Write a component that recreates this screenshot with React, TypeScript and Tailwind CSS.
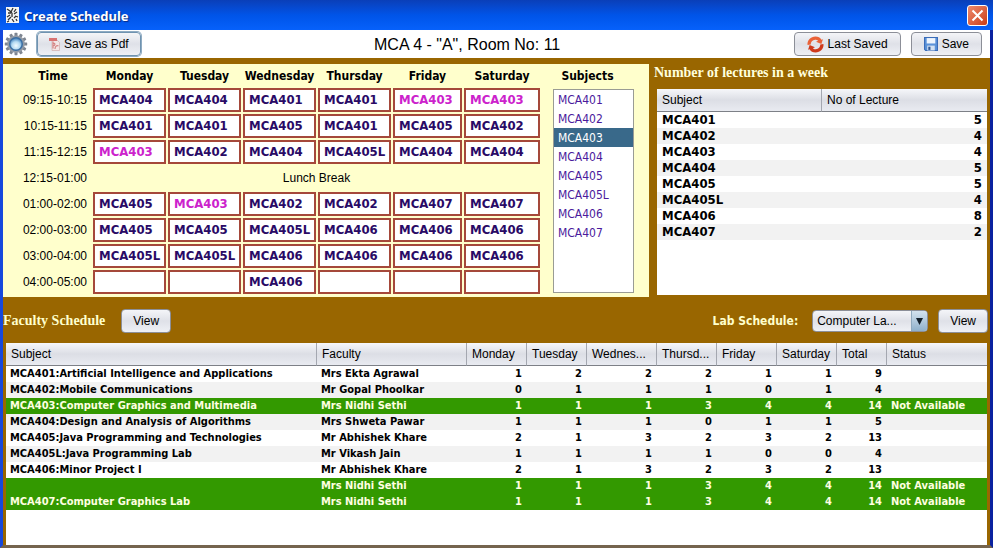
import type { ReactNode } from 'react';

const days = ['Monday', 'Tuesday', 'Wednesday', 'Thursday', 'Friday', 'Saturday'];

const slots: { time: string; cells: string[] | null }[] = [
  { time: '09:15-10:15', cells: ['MCA404', 'MCA404', 'MCA401', 'MCA401', 'MCA403', 'MCA403'] },
  { time: '10:15-11:15', cells: ['MCA401', 'MCA401', 'MCA405', 'MCA401', 'MCA405', 'MCA402'] },
  { time: '11:15-12:15', cells: ['MCA403', 'MCA402', 'MCA404', 'MCA405L', 'MCA404', 'MCA404'] },
  { time: '12:15-01:00', cells: null },
  { time: '01:00-02:00', cells: ['MCA405', 'MCA403', 'MCA402', 'MCA402', 'MCA407', 'MCA407'] },
  { time: '02:00-03:00', cells: ['MCA405', 'MCA405', 'MCA405L', 'MCA406', 'MCA406', 'MCA406'] },
  { time: '03:00-04:00', cells: ['MCA405L', 'MCA405L', 'MCA406', 'MCA406', 'MCA406', 'MCA406'] },
  { time: '04:00-05:00', cells: ['', '', 'MCA406', '', '', ''] },
];

const lectures: [string, number][] = [
  ['MCA401', 5],
  ['MCA402', 4],
  ['MCA403', 4],
  ['MCA404', 5],
  ['MCA405', 5],
  ['MCA405L', 4],
  ['MCA406', 8],
  ['MCA407', 2],
];

const facultyHeads = ['Subject', 'Faculty', 'Monday', 'Tuesday', 'Wednes...', 'Thursd...', 'Friday', 'Saturday', 'Total', 'Status'];

const faculty: { subject: string; name: string; counts: number[]; busy?: boolean }[] = [
  { subject: 'MCA401:Artificial Intelligence and Applications', name: 'Mrs Ekta Agrawal', counts: [1, 2, 2, 2, 1, 1, 9] },
  { subject: 'MCA402:Mobile Communications', name: 'Mr Gopal Phoolkar', counts: [0, 1, 1, 1, 0, 1, 4] },
  { subject: 'MCA403:Computer Graphics and Multimedia', name: 'Mrs Nidhi Sethi', counts: [1, 1, 1, 3, 4, 4, 14], busy: true },
  { subject: 'MCA404:Design and Analysis of Algorithms', name: 'Mrs Shweta Pawar', counts: [1, 1, 1, 0, 1, 1, 5] },
  { subject: 'MCA405:Java Programming and Technologies', name: 'Mr Abhishek Khare', counts: [2, 1, 3, 2, 3, 2, 13] },
  { subject: 'MCA405L:Java Programming Lab', name: 'Mr Vikash Jain', counts: [1, 1, 1, 1, 0, 0, 4] },
  { subject: 'MCA406:Minor Project I', name: 'Mr Abhishek Khare', counts: [2, 1, 3, 2, 3, 2, 13] },
  { subject: '', name: 'Mrs Nidhi Sethi', counts: [1, 1, 1, 3, 4, 4, 14], busy: true },
  { subject: 'MCA407:Computer Graphics Lab', name: 'Mrs Nidhi Sethi', counts: [1, 1, 1, 3, 4, 4, 14], busy: true },
];

const tahoma = "font-['DejaVu_Sans_Condensed','DejaVu_Sans',sans-serif]";

function PushButton({ children, focused, wide }: { children: ReactNode; focused?: boolean; wide?: boolean }) {
  return (
    <button
      type="button"
      className={`flex h-6 items-center gap-1 rounded-[4px] border bg-linear-to-b from-[#f4f5f8] via-[#dfe1e8] to-[#eef0f5] text-[12px] leading-4 text-black ${
        wide ? 'px-3' : 'px-[11px]'
      } ${focused ? 'border-[#6f93b0] ring-1 ring-[#8fabc2]' : 'border-[#8c8f98]'}`}
    >
      {children}
    </button>
  );
}

function Th({ children }: { children: ReactNode }) {
  return (
    <th
      scope="col"
      className="h-[23px] truncate border-r border-b border-r-[#a4a7b0] border-b-[#7d8087] bg-linear-to-b from-[#f6f7fa] via-[#dcdee5] to-[#e9ebf1] px-[5px] text-left text-[12px] font-normal last:border-r-0"
    >
      {children}
    </th>
  );
}

function AppIcon() {
  return (
    <svg className="h-4 w-[13px] shrink-0" viewBox="0 0 13 16" aria-hidden="true">
      <rect width="13" height="16" fill="#f4f4f4" />
      <path
        d="M1 2l3 2M7 1l-2 4M10 2l-2 3M2 6h3M8 7l3-2M1 10l3-2M6 6v4M9 9l3 1M2 13l3-3M6 12l2 3M10 12l1 2M4 4l2 2M8 11l2-2M1 15l2-1"
        stroke="#333"
        strokeWidth="1.3"
      />
    </svg>
  );
}

function Gear() {
  const teeth = [0, 30, 60, 90, 120, 150, 180, 210, 240, 270, 300, 330];
  return (
    <svg className="size-6 shrink-0" viewBox="0 0 24 24" aria-hidden="true">
      <defs>
        <radialGradient id="hub" cx="50%" cy="65%" r="60%">
          <stop offset="0" stopColor="#f2fbff" />
          <stop offset="0.6" stopColor="#b4daf2" />
          <stop offset="1" stopColor="#5a94c8" />
        </radialGradient>
      </defs>
      {teeth.map((angle) => (
        <rect key={angle} x="10.5" y="0.8" width="3" height="4" rx="0.6" fill="#7e8590" transform={`rotate(${angle} 12 12)`} />
      ))}
      <circle cx="12" cy="12" r="8.8" fill="#959ca6" />
      <circle cx="12" cy="12" r="7" fill="#3a6ea3" />
      <circle cx="12" cy="12" r="5.6" fill="url(#hub)" />
    </svg>
  );
}

function PdfIcon() {
  return (
    <svg className="h-[14px] w-[11px]" viewBox="0 0 11 14" aria-hidden="true">
      <path d="M3 3h5l2.500 2.500V13.500H3z" fill="#f3e6e6" stroke="#d3b4b4" strokeWidth="0.8" />
      <rect x="0" y="1" width="8" height="3" fill="#d87474" />
      <path d="M4 4.500v7M4 6c3 0 2 3 0 3M6 12c0-3 2-4 3.500-3" fill="none" stroke="#d48484" strokeWidth="1.2" />
    </svg>
  );
}

function RefreshIcon() {
  return (
    <svg className="size-[17px]" viewBox="0 0 16 16" aria-hidden="true">
      <path d="M0.500 8.500C0 4 3.500 0.500 8 0.500c2.500 0 4.500 1 5.500 3l1.500-.5-1.500 4.500-5-2 2-1C9.500 3.600 8.600 3.500 7.800 3.500 5 3.600 3.500 5.500 3.500 8z" fill="#ea6238" />
      <path d="M15.500 7.500c.5 4.500-3 8-7.500 8-2.500 0-4.500-1-5.500-3L1 13l1.500-4.500 5 2-2 1c1 .9 1.900 1 2.700 1 2.800-.1 4.300-2 4.300-4.500z" fill="#cf3a1c" />
    </svg>
  );
}

function DiskIcon() {
  return (
    <svg className="size-[14px]" viewBox="0 0 13 13" aria-hidden="true">
      <path d="M0.500 0.500h12v12h-11l-1-1z" fill="#5b92d8" stroke="#3a6cb8" />
      <rect x="2.500" y="1" width="8" height="5" fill="#eef5fd" />
      <rect x="3" y="8" width="7" height="4.500" fill="#d3e1f2" />
      <rect x="4" y="9" width="2" height="3" fill="#2f5795" />
    </svg>
  );
}

export default function App() {
  return (
    <div className="flex min-h-screen flex-col font-['Liberation_Sans',Arial,sans-serif] text-[12px] leading-4 text-black">
      <header className="flex h-[30px] items-center bg-linear-to-b from-[#0a3fb8] via-[#0054e8] to-[#0661fb] pr-[5px] pl-[6px]">
        <AppIcon />
        <h1 className="mt-[2px] ml-[5px] flex-1 font-['Noto_Sans',sans-serif] text-[13px] leading-4 font-bold text-white [text-shadow:1px_1px_1px_#0a2a80]">
          Create Schedule
        </h1>
        <button
          type="button"
          aria-label="Close"
          className="flex size-[21px] items-center justify-center rounded-[3px] border border-white bg-linear-to-br from-[#ee8a6c] to-[#c93a12]"
        >
          <svg className="size-[13px]" viewBox="0 0 13 13" aria-hidden="true">
            <path d="M1.500 1.500l10 10M11.500 1.500l-10 10" stroke="#fff" strokeWidth="2" />
          </svg>
        </button>
      </header>

      <div className="flex flex-1 flex-col border-x-[3px] border-b-[3px] border-r-[#0a22a0] border-b-[#75644e] border-l-[#1648dc] bg-[#996600]">
        <div className="flex h-7 items-center justify-between bg-white pr-2 pl-px">
          <div className="flex items-center gap-[9px]">
            <Gear />
            <PushButton focused>
              <PdfIcon />
              Save as Pdf
            </PushButton>
          </div>
          <h2 className="pt-[2px] text-[16px] leading-5">MCA 4 - "A", Room No: 11</h2>
          <div className="flex gap-[10px]">
            <PushButton wide>
              <RefreshIcon />
              Last Saved
            </PushButton>
            <PushButton wide>
              <DiskIcon />
              Save
            </PushButton>
          </div>
        </div>

        <div className="grid grid-cols-[646fr_341fr] pt-[6px]">
          <section className="grid grid-cols-[539fr_107fr] bg-[#ffffcc] pb-px">
            <table className="w-full table-fixed border-separate border-spacing-[2px]">
              <colgroup>
                <col className="w-[86px]" />
                <col className="w-[73px]" />
                <col className="w-[73px]" />
                <col className="w-[73px]" />
                <col className="w-[73px]" />
                <col className="w-[69px]" />
                <col className="w-[76px]" />
              </colgroup>
              <thead>
                <tr className={`h-5 text-[12px] ${tahoma}`}>
                  <th scope="col" className="p-0 pl-[10px]">Time</th>
                  {days.map((day) => (
                    <th key={day} scope="col" className="p-0">
                      {day}
                    </th>
                  ))}
                </tr>
              </thead>
              <tbody>
                {slots.map(({ time, cells }) => (
                  <tr key={time} className="h-6">
                    <th scope="row" className="p-0 pr-1 text-right font-normal">
                      {time}
                    </th>
                    {cells ? (
                      cells.map((code, i) => (
                        <td
                          key={i}
                          className={`border-2 border-[#a5483a] bg-white p-0 pl-1 text-[13px] leading-4 font-bold ${tahoma} ${
                            code === 'MCA403' ? 'text-[#cc22cc]' : 'text-[#2a0a66]'
                          }`}
                        >
                          {code}
                        </td>
                      ))
                    ) : (
                      <td colSpan={6} className="p-0 text-center">
                        Lunch Break
                      </td>
                    )}
                  </tr>
                ))}
              </tbody>
            </table>
            <div className={`flex flex-col pt-1 pr-[15px] pb-[3px] pl-[11px] ${tahoma}`}>
              <label htmlFor="subjects" className="mb-[5px] pr-3 text-center font-bold">
                Subjects
              </label>
              <select
                id="subjects"
                size={10}
                defaultValue="MCA403"
                className="h-[204px] w-full appearance-none overflow-hidden border border-[#9a9c94] bg-white p-0 text-[12px] text-[#4b1a9c]"
              >
                {lectures.map(([code]) => (
                  <option
                    key={code}
                    value={code}
                    className="h-[19px] min-h-0 px-1 pt-[3px] pb-0 checked:bg-[#39698a] checked:bg-linear-to-b checked:from-[#39698a] checked:to-[#39698a] checked:text-white"
                  >
                    {code}
                  </option>
                ))}
              </select>
            </div>
          </section>

          <section className="flex flex-col pr-[3px] pb-[2px] pl-2">
            <h3 className="-ml-[3px] h-[25px] font-['Liberation_Serif',serif] text-[14px] leading-[18px] font-bold text-[#ffffdd]">
              Number of lectures in a week
            </h3>
            <div className="flex-1 bg-white">
              <table className="w-full table-fixed border-separate border-spacing-0">
                <thead>
                  <tr>
                    <Th>Subject</Th>
                    <Th>No of Lecture</Th>
                  </tr>
                </thead>
                <tbody className={`text-[13px] leading-4 font-bold ${tahoma}`}>
                  {lectures.map(([code, count]) => (
                    <tr key={code} className="h-4 even:bg-[#f2f2f2]">
                      <td className="p-0 pl-[5px]">{code}</td>
                      <td className="p-0 pr-[5px] text-right">{count}</td>
                    </tr>
                  ))}
                </tbody>
              </table>
            </div>
          </section>
        </div>

        <div className="flex h-[46px] items-center pt-[2px] pr-[2px]">
          <h3 className="font-['Liberation_Serif',serif] text-[14px] leading-[18px] font-bold text-[#ffffcc]">Faculty Schedule</h3>
          <div className="ml-4 flex flex-1">
            <PushButton>View</PushButton>
          </div>
          <label htmlFor="lab" className={`mr-[14px] text-[12px] leading-4 font-bold text-[#ffffcc] ${tahoma}`}>
            Lab Schedule:
          </label>
          <div className="relative mr-[10px]">
            <select
              id="lab"
              className="h-[22px] w-[116px] appearance-none rounded-[4px] border border-[#8c8f98] bg-linear-to-b from-[#f4f5f8] via-[#dfe1e8] to-[#eef0f5] pr-4 pl-1 text-[12px] leading-4 text-black"
            >
              <option>Computer La...</option>
            </select>
            <span className="pointer-events-none absolute top-px right-px bottom-px flex w-4 items-center justify-center rounded-r-[3px] border-l border-[#8fa9be] bg-linear-to-b from-[#d4e2ee] to-[#8fb0cb]">
              <svg className="h-[7px] w-[7px]" viewBox="0 0 7 7" aria-hidden="true">
                <path d="M0 0h7L3.500 7z" fill="#14202b" />
              </svg>
            </span>
          </div>
          <PushButton>View</PushButton>
        </div>

        <section className="mr-[3px] ml-[3px] flex-1 bg-white">
          <table className="w-full table-fixed border-separate border-spacing-0">
            <colgroup>
              <col className="w-[311px]" />
              <col className="w-[150px]" />
              <col className="w-[60px]" />
              <col className="w-[60px]" />
              <col className="w-[70px]" />
              <col className="w-[60px]" />
              <col className="w-[60px]" />
              <col className="w-[60px]" />
              <col className="w-[50px]" />
              <col className="w-[100px]" />
            </colgroup>
            <thead>
              <tr>
                {facultyHeads.map((head) => (
                  <Th key={head}>{head}</Th>
                ))}
              </tr>
            </thead>
            <tbody className={`text-[11px] leading-4 font-bold ${tahoma}`}>
              {faculty.map(({ subject, name, counts, busy }, row) => (
                <tr key={row} className={`h-4 ${busy ? 'bg-[#339900] text-[#ffffe0]' : row % 2 ? 'bg-[#f2f2f2]' : 'bg-white'}`}>
                  <td className="p-0 pl-1 whitespace-nowrap">{subject}</td>
                  <td className="p-0 pl-1 whitespace-nowrap">{name}</td>
                  {counts.map((count, i) => (
                    <td key={i} className="p-0 pr-[5px] text-right">
                      {count}
                    </td>
                  ))}
                  <td className="p-0 pl-1 whitespace-nowrap">{busy ? 'Not Available' : ''}</td>
                </tr>
              ))}
            </tbody>
          </table>
        </section>
      </div>
    </div>
  );
}
